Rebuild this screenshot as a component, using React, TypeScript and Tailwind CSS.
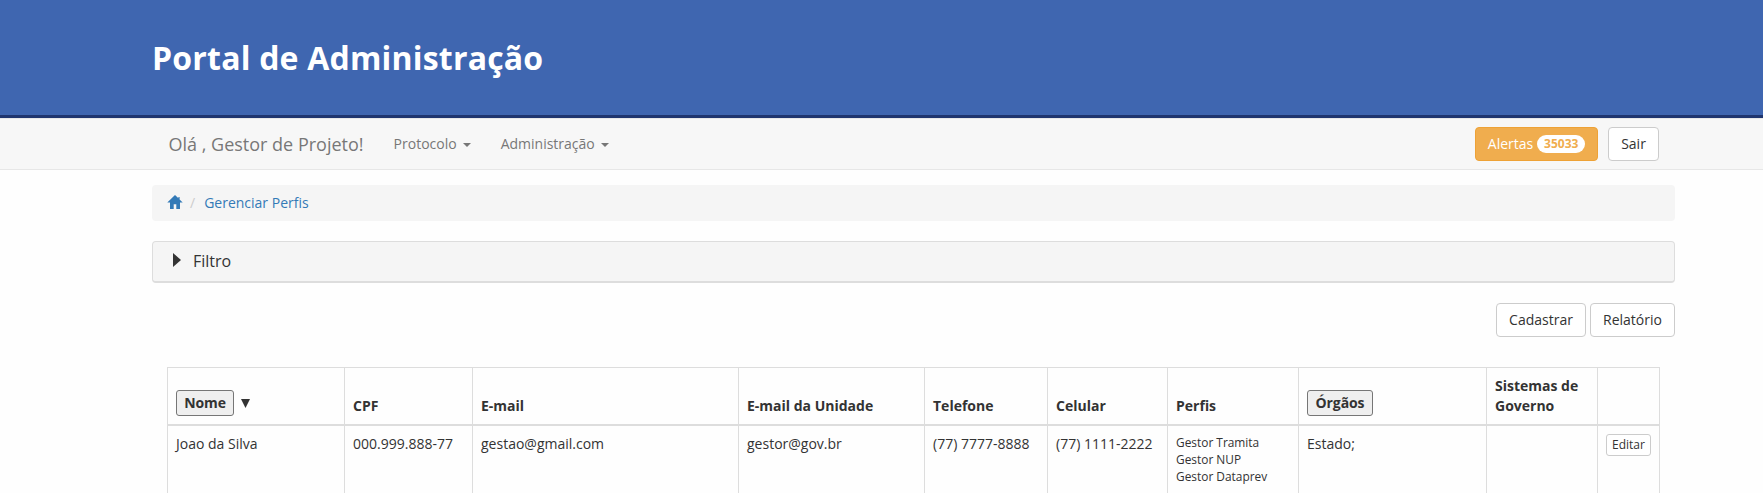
import type { ReactNode } from 'react';

const columns: { label: ReactNode; width: number }[] = [
  {
    label: (
      <div className="flex items-center">
        <SortButton className="w-[58px]">Nome</SortButton>
        <svg className="ml-[7px]" width="9" height="9" viewBox="0 0 9 9" fill="#333">
          <path d="M0 0h9L4.5 9z" />
        </svg>
      </div>
    ),
    width: 177,
  },
  { label: 'CPF', width: 128 },
  { label: 'E-mail', width: 266 },
  { label: 'E-mail da Unidade', width: 186 },
  { label: 'Telefone', width: 123 },
  { label: 'Celular', width: 120 },
  { label: 'Perfis', width: 131 },
  { label: <SortButton className="w-[66px]">Órgãos</SortButton>, width: 188 },
  { label: 'Sistemas de Governo', width: 111 },
  { label: '', width: 62 },
];

const row: ReactNode[] = [
  'Joao da Silva',
  '000.999.888-77',
  'gestao@gmail.com',
  'gestor@gov.br',
  '(77) 7777-8888',
  '(77) 1111-2222',
  <ul className="text-[11.9px] leading-[17px]">
    <li>Gestor Tramita</li>
    <li>Gestor NUP</li>
    <li>Gestor Dataprev</li>
  </ul>,
  'Estado;',
  '',
  <button className="block h-[22px] w-[45px] rounded-[3px] border border-[#ccc] bg-white text-center text-[12px] leading-[20px]">
    Editar
  </button>,
];

function SortButton({ children, className }: { children: ReactNode; className: string }) {
  return (
    <button
      className={`flex h-[26px] items-center justify-center rounded-[3px] border border-[#767676] bg-[#efefef] font-bold tracking-[-0.1px] ${className}`}
    >
      {children}
    </button>
  );
}

function Button({ children, className }: { children: ReactNode; className: string }) {
  return (
    <button className={`h-[34px] rounded border border-[#ccc] bg-white text-center leading-5 text-[#333] ${className}`}>
      {children}
    </button>
  );
}

function NavItem({ children }: { children: ReactNode }) {
  return (
    <a className="flex items-center whitespace-nowrap">
      {children}
      <span className="ml-[6px] mt-[2px] border-x-4 border-t-4 border-x-transparent border-t-[#777]" />
    </a>
  );
}

export default function App() {
  return (
    <div className="h-[493px] overflow-hidden bg-[#fefefe] font-['Open_Sans',sans-serif] text-[14px] leading-5 text-[#333]">
      <header className="flex h-[118px] items-center border-b-[3px] border-[#1f356e] bg-[#3f66b0] pl-[152px]">
        <h1 className="text-[32px] font-bold leading-[44px] tracking-[0.2px] text-white">Portal de Administração</h1>
      </header>

      <nav className="flex h-[52px] items-center border-y border-[#e7e7e7] bg-[#f7f7f7] pl-[168.5px] pr-[104px] text-[#777]">
        <span className="text-[18px]">Olá , Gestor de Projeto!</span>
        <div className="ml-[30px] flex gap-[30px]">
          <NavItem>Protocolo</NavItem>
          <NavItem>Administração</NavItem>
        </div>
        <button className="ml-auto flex h-[34px] w-[123px] items-center justify-center gap-1 rounded border border-[#eea236] bg-[#f0ad4e] text-white">
          Alertas
          <span className="flex h-[18px] w-12 items-center justify-center rounded-full bg-white text-[12px] font-bold leading-3 text-[#f0ad4e]">
            35033
          </span>
        </button>
        <Button className="ml-[10px] w-[51px]">Sair</Button>
      </nav>

      <main className="ml-[152px] w-[1523px] pt-[15px]">
        <div className="flex h-9 items-center rounded bg-[#f5f5f5] pl-[15px] text-[#337ab7]">
          <svg className="-mt-[2px]" width="16" height="14" viewBox="0 0 16 14" fill="currentColor">
            <path d="M8 0 .3 7.5H3V14h3.7V9.2h2.6V14H13V7.5h2.7L12.6 4.4V2h-1.2v1.2z" />
          </svg>
          <span className="ml-[7px] text-[#ccc]">/</span>
          <a className="ml-[9px]">Gerenciar Perfis</a>
        </div>

        <div className="mt-5 flex h-[42px] items-center rounded border border-b-2 border-[#ddd] bg-[#f5f5f5] pb-[2px] pl-[20px]">
          <svg className="-mt-[2px]" width="8" height="14" viewBox="0 0 8 14" fill="#333">
            <path d="M0 0v14l8-7z" />
          </svg>
          <span className="ml-3 text-[16px]">Filtro</span>
        </div>

        <div className="mt-5 flex justify-end gap-1">
          <Button className="w-[90px]">Cadastrar</Button>
          <Button className="w-[85px]">Relatório</Button>
        </div>

        <table className="ml-[15px] mt-[30px] w-[1493px] table-fixed border-separate border-spacing-0 border-r border-t border-[#ddd] text-left">
          <colgroup>
            {columns.map((c, i) => (
              <col key={i} style={{ width: c.width }} />
            ))}
          </colgroup>
          <thead>
            <tr>
              {columns.map((c, i) => (
                <th key={i} className="border-b-2 border-l border-[#ddd] py-2 pl-2 pr-1 align-bottom font-bold">
                  {c.label}
                </th>
              ))}
            </tr>
          </thead>
          <tbody>
            <tr>
              {row.map((cell, i) => (
                <td key={i} className="h-[90px] whitespace-nowrap border-l border-[#ddd] py-2 pl-2 align-top">
                  {cell}
                </td>
              ))}
            </tr>
          </tbody>
        </table>
      </main>
    </div>
  );
}
